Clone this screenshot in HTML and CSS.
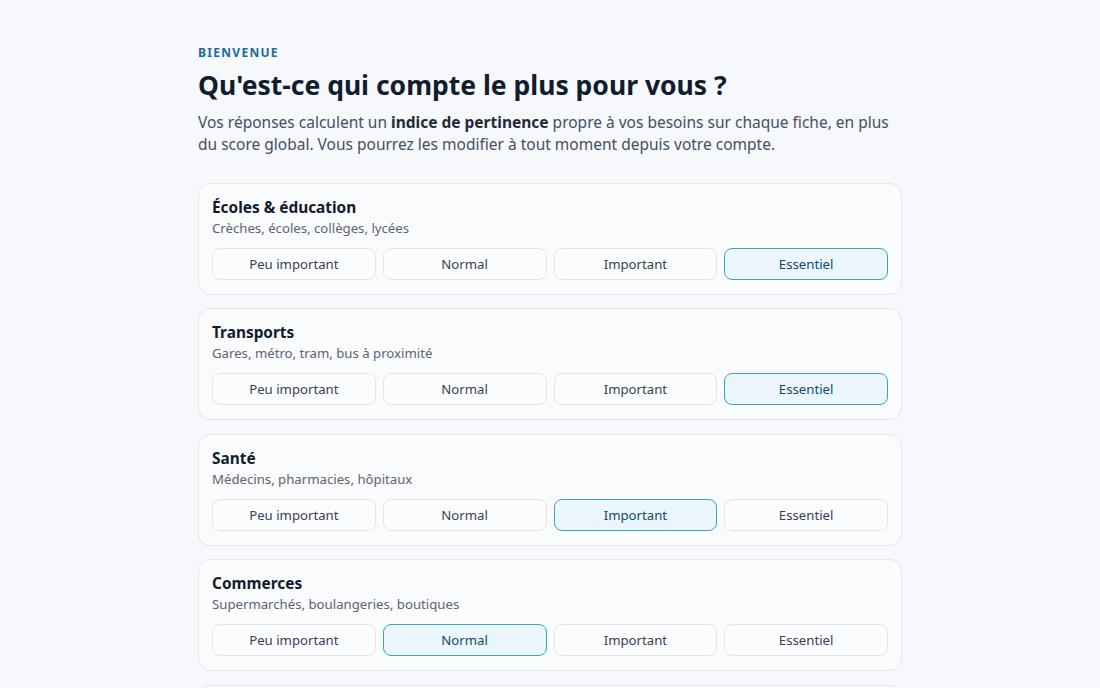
FILE: index.html
```html
<!DOCTYPE html>
<html lang="fr">
<head>
<meta charset="utf-8">
<title>Bienvenue</title>
<link rel="stylesheet" href="styles.css">
</head>
<body>
<main class="page">
  <div class="eyebrow">BIENVENUE</div>
  <h1 class="title">Qu'est-ce qui compte le plus pour vous ?</h1>
  <p class="intro">Vos réponses calculent un <strong>indice de pertinence</strong> propre à vos besoins sur chaque fiche, en plus du score global. Vous pourrez les modifier à tout moment depuis votre compte.</p>

  <div class="cards">
    <section class="card">
      <h2 class="card-title">Écoles &amp; éducation</h2>
      <p class="card-sub">Crèches, écoles, collèges, lycées</p>
      <div class="options">
        <button class="opt">Peu important</button>
        <button class="opt">Normal</button>
        <button class="opt">Important</button>
        <button class="opt selected">Essentiel</button>
      </div>
    </section>
    <section class="card">
      <h2 class="card-title">Transports</h2>
      <p class="card-sub">Gares, métro, tram, bus à proximité</p>
      <div class="options">
        <button class="opt">Peu important</button>
        <button class="opt">Normal</button>
        <button class="opt">Important</button>
        <button class="opt selected">Essentiel</button>
      </div>
    </section>
    <section class="card">
      <h2 class="card-title">Santé</h2>
      <p class="card-sub">Médecins, pharmacies, hôpitaux</p>
      <div class="options">
        <button class="opt">Peu important</button>
        <button class="opt">Normal</button>
        <button class="opt selected">Important</button>
        <button class="opt">Essentiel</button>
      </div>
    </section>
    <section class="card">
      <h2 class="card-title">Commerces</h2>
      <p class="card-sub">Supermarchés, boulangeries, boutiques</p>
      <div class="options">
        <button class="opt">Peu important</button>
        <button class="opt selected">Normal</button>
        <button class="opt">Important</button>
        <button class="opt">Essentiel</button>
      </div>
    </section>
    <section class="card">
      <h2 class="card-title">Sécurité</h2>
      <p class="card-sub">Délinquance, éclairage public</p>
      <div class="options">
        <button class="opt">Peu important</button>
        <button class="opt selected">Normal</button>
        <button class="opt">Important</button>
        <button class="opt">Essentiel</button>
      </div>
    </section>
  </div>
</main>
</body>
</html>
```
FILE: styles.css
```css
* { box-sizing: border-box; }
html, body { margin: 0; padding: 0; }
body {
  background: #f6f8fb;
  font-family: "Noto Sans", "Open Sans", sans-serif;
  color: #0f1b2d;
}
.page {
  width: 704px;
  margin: 0 auto;
  padding-top: 45px;
}
.eyebrow {
  font-size: 12px;
  line-height: 16px;
  font-weight: 700;
  letter-spacing: 1.3px;
  color: #1b6b9c;
}
.title {
  margin: 7px 0 0;
  font-size: 26.5px;
  line-height: 34px;
  font-weight: 700;
  color: #111c2c;
}
.intro {
  margin: 9px 0 0;
  font-size: 15.5px;
  line-height: 22px;
  color: #435063;
}
.intro strong { color: #1f2a3a; font-weight: 700; }
.cards {
  margin-top: 28px;
  display: flex;
  flex-direction: column;
  gap: 13.4px;
}
.card {
  background: #f9fbfd;
  border: 1px solid #e2e7ed;
  border-radius: 12px;
  padding: 13px 13px 14px;
}
.card-title {
  margin: 0;
  font-size: 15.4px;
  line-height: 22px;
  font-weight: 700;
  color: #111b2b;
}
.card-sub {
  margin: 0;
  font-size: 13.2px;
  line-height: 18px;
  color: #5a6474;
}
.options {
  margin-top: 11px;
  display: grid;
  grid-template-columns: repeat(4, 1fr);
  gap: 7px;
}
.opt {
  height: 32px;
  border: 1px solid #e1e6ec;
  background: #fbfcfe;
  border-radius: 8px;
  font-family: inherit;
  font-size: 13.2px;
  color: #374253;
  padding: 0;
  cursor: pointer;
}
.opt.selected {
  background: #eaf6fc;
  border: 1.5px solid #3aa3c3;
  color: #124a66;
}
```
